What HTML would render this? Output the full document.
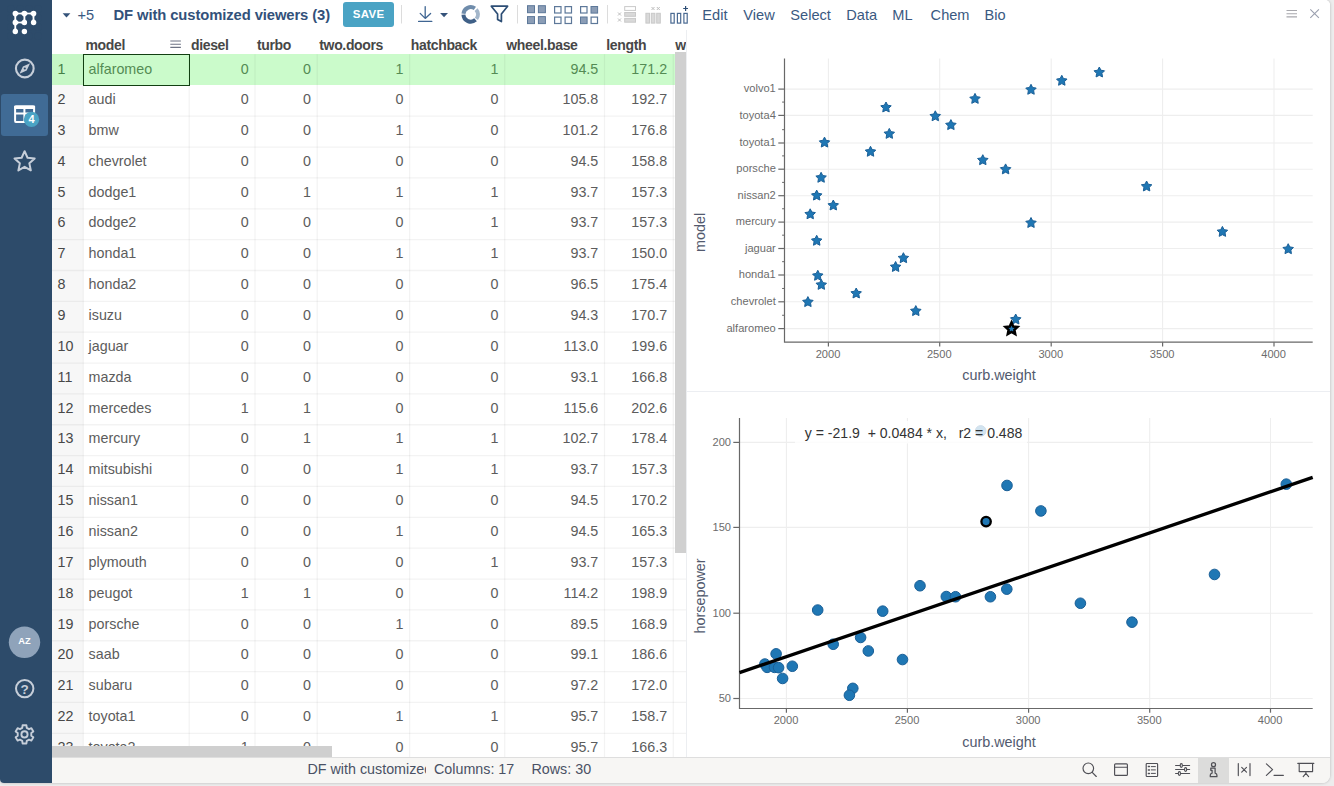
<!DOCTYPE html>
<html><head><meta charset="utf-8"><title>DF with customized viewers</title>
<style>
*{box-sizing:border-box;margin:0;padding:0}
html,body{width:1334px;height:786px;overflow:hidden;background:#ededed;font-family:"Liberation Sans",sans-serif;}
.win{position:absolute;left:0;top:0;width:1330px;height:783px;background:#fff;overflow:hidden;border-radius:0 5px 8px 4px;box-shadow:0 0 3px rgba(0,0,0,.25)}
.abs{position:absolute}
.side{position:absolute;left:0;top:0;width:52px;height:783px;background:#2d4b6a}
.tb{position:absolute;left:52px;top:0;width:1278px;height:30px;background:#fff}
.tb .t{position:absolute;top:0;height:30px;line-height:30px;white-space:nowrap;color:#3a5981;font-size:14.6px}
.title{font-weight:bold;color:#32517a !important;font-size:14.8px !important;letter-spacing:-0.1px}
.save{position:absolute;left:291px;top:2px;width:51.2px;height:25px;border-radius:3px;background:#4aa3c4;color:#fff;font-weight:bold;font-size:11.5px;line-height:25px;text-align:center;letter-spacing:.3px}
.grid{position:absolute;left:52px;top:30px;width:634px;height:727.5px;overflow:hidden;background:#fff}
.hdr{position:absolute;top:0;height:24px;line-height:30px;font-weight:bold;font-size:14px;color:#474747;white-space:nowrap;letter-spacing:-0.35px}
.row{position:absolute;left:0;width:634px;height:30.86px}
.c{position:absolute;top:0;height:30.86px;line-height:30.4px;font-size:14.3px;color:#5c5c5c;white-space:nowrap}
.c.n{text-align:right;padding-right:6.2px}
.c.s{text-align:left;padding-left:5.2px}
.c.rh{color:#484848;padding-left:5.6px}
.row.sel .c{color:#548b54}
.row.sel .c.rh{color:#457f45}
.status{position:absolute;left:52px;top:757px;width:1278px;height:26px;background:#f7f6f4;border-top:1px solid #dedede}
.status .t{position:absolute;top:0;line-height:23px;font-size:14.3px;color:#4a5164;white-space:nowrap}
.chart text{font-family:"Liberation Sans",sans-serif}
</style></head>
<body>
<div class="win">
<div class="side"><svg class="abs" style="left:0;top:0" width="52" height="783" viewBox="0 0 52 783">
<g fill="#fff">
<rect x="15.3" y="11.2" width="9.10" height="4.6"/>
<rect x="24.4" y="11.2" width="9.20" height="4.6"/>
<rect x="13.0" y="13.5" width="4.6" height="9.00"/>
<rect x="13.0" y="22.5" width="4.6" height="9.00"/>
<rect x="22.099999999999998" y="13.5" width="4.6" height="9.00"/>
<rect x="15.3" y="20.2" width="9.10" height="4.6"/>
<rect x="31.3" y="13.5" width="4.6" height="9.00"/>
</g><g fill="#2d4b6a">
<circle cx="10.75" cy="9.00" r="3.72"/>
<circle cx="10.75" cy="18.00" r="3.72"/>
<circle cx="10.75" cy="27.00" r="3.72"/>
<circle cx="10.75" cy="36.00" r="3.72"/>
<circle cx="19.85" cy="9.00" r="3.72"/>
<circle cx="19.85" cy="18.00" r="3.72"/>
<circle cx="19.85" cy="27.00" r="3.72"/>
<circle cx="19.85" cy="36.00" r="3.72"/>
<circle cx="28.95" cy="9.00" r="3.72"/>
<circle cx="28.95" cy="18.00" r="3.72"/>
<circle cx="28.95" cy="27.00" r="3.72"/>
<circle cx="28.95" cy="36.00" r="3.72"/>
<circle cx="38.05" cy="9.00" r="3.72"/>
<circle cx="38.05" cy="18.00" r="3.72"/>
<circle cx="38.05" cy="27.00" r="3.72"/>
<circle cx="38.05" cy="36.00" r="3.72"/>
</g><g fill="#fff">
<circle cx="15.3" cy="13.5" r="2.7"/>
<circle cx="24.4" cy="13.5" r="2.7"/>
<circle cx="33.6" cy="13.5" r="2.7"/>
<circle cx="15.3" cy="22.5" r="2.7"/>
<circle cx="24.4" cy="22.5" r="2.7"/>
<circle cx="33.6" cy="22.5" r="2.7"/>
<circle cx="15.3" cy="31.5" r="2.7"/>
<circle cx="24.4" cy="31.5" r="2.7"/>
</g>
<circle cx="24.8" cy="68.5" r="8.85" fill="none" stroke="#c6ced9" stroke-width="2.1"/>
<path d="M30.1,63.3 L26.7,70.4 L19.5,73.7 L22.9,66.6 Z" fill="#c6ced9"/>
<circle cx="24.8" cy="68.5" r="1.1" fill="#2d4b6a"/>
<rect x="1" y="94" width="47" height="42" rx="3" fill="#406b95"/>
<g fill="none" stroke="#fff" stroke-width="2">
<rect x="15.1" y="106.5" width="19" height="15.6" rx="1.2"/>
<path d="M15.1,113.6 H34 M24.4,107 V122"/>
</g>
<rect x="14.1" y="105.5" width="21" height="3.4" rx="1" fill="#fff"/>
<circle cx="31.5" cy="119.4" r="7.7" fill="#4aa3c4"/>
<text x="31.5" y="123.3" font-size="11" font-weight="bold" fill="#fff" text-anchor="middle" font-family="Liberation Sans">4</text>
<path d="M24.60,151.20 L27.54,157.75 L34.68,158.52 L29.36,163.35 L30.83,170.38 L24.60,166.80 L18.37,170.38 L19.84,163.35 L14.52,158.52 L21.66,157.75Z" fill="none" stroke="#c6ced9" stroke-width="2" stroke-linejoin="round"/>
<circle cx="24.5" cy="642.3" r="15.7" fill="#8fa3ba"/>
<text x="24.5" y="644.3" font-size="9.3" font-weight="bold" fill="#fff" text-anchor="middle" font-family="Liberation Sans">AZ</text>
<circle cx="24.7" cy="688.6" r="8.7" fill="none" stroke="#c6ced9" stroke-width="2"/>
<text x="24.7" y="693.6" font-size="13.5" font-weight="bold" fill="#c6ced9" text-anchor="middle" font-family="Liberation Sans">?</text>
<path d="M22.25,727.88 L22.57,725.30 L26.43,725.30 L26.75,727.88 L29.03,729.19 L31.41,728.18 L33.34,731.53 L31.27,733.08 L31.27,735.72 L33.34,737.27 L31.41,740.62 L29.03,739.61 L26.75,740.92 L26.43,743.50 L22.57,743.50 L22.25,740.92 L19.97,739.61 L17.59,740.62 L15.66,737.27 L17.73,735.72 L17.73,733.08 L15.66,731.53 L17.59,728.18 L19.97,729.19Z" fill="none" stroke="#c6ced9" stroke-width="1.9" stroke-linejoin="round"/>
<circle cx="24.5" cy="734.4" r="3.1" fill="none" stroke="#c6ced9" stroke-width="1.9"/>
</svg></div>
<div class="tb">
<div class="t " style="left:25.5px">+5</div>
<div class="t title" style="left:61.5px">DF with customized viewers (3)</div>
<div class="save">SAVE</div>
<div class="t " style="left:650.3px">Edit</div>
<div class="t " style="left:691.3px">View</div>
<div class="t " style="left:738.3px">Select</div>
<div class="t " style="left:794.3px">Data</div>
<div class="t " style="left:840.3px">ML</div>
<div class="t " style="left:878.6px">Chem</div>
<div class="t " style="left:932.6px">Bio</div>
</div>
<svg class="abs" style="left:0;top:0" width="1330" height="30" viewBox="0 0 1330 30">
<path d="M62.6,13.2 L70.4,13.2 L66.5,17.4 Z" fill="#35537a"/>
<g fill="none" stroke="#3f6592" stroke-width="1.3" stroke-linecap="round" stroke-linejoin="round"><path d="M425.2,6.6 V18.3 M420.2,13.4 L425.2,18.4 L430.6,13.4 M418.6,21.4 H431.8"/></g>
<path d="M440.1,13 L448,13 L444.05,17.2 Z" fill="#35537a"/>
<g fill="none" stroke-width="4">
<path d="M463.48,13.77 A7.25,7.25 0 0 1 474.86,8.46" stroke="#6f8cab"/>
<path d="M476.09,9.55 A7.25,7.25 0 0 1 476.41,18.86" stroke="#a3b6ca"/>
<path d="M475.55,19.79 A7.25,7.25 0 0 1 463.45,14.65" stroke="#3f6087"/>
</g>
<path d="M491.3,6.2 H507.6 L501.4,14 V21.6 L497.6,19.4 V14 Z" fill="none" stroke="#2d4e75" stroke-width="1.7" stroke-linejoin="round"/>
<path d="M401.5,5 V23.5 M517.5,5 V23.5 M607.5,5 V23.5" stroke="#dcdcdc" stroke-width="1"/>
<rect x="527.5" y="5.7" width="7.0" height="7.0" fill="#8b9db6" stroke="#5d7899" stroke-width="1"/>
<rect x="538.4" y="5.7" width="7.0" height="7.0" fill="#8b9db6" stroke="#5d7899" stroke-width="1"/>
<rect x="527.5" y="16.6" width="7.0" height="7.0" fill="#8b9db6" stroke="#5d7899" stroke-width="1"/>
<rect x="538.4" y="16.6" width="7.0" height="7.0" fill="#8b9db6" stroke="#5d7899" stroke-width="1"/>
<rect x="554.6" y="6.6" width="6.3999999999999995" height="6.3999999999999995" fill="#fff" stroke="#5d7899" stroke-width="1.2"/>
<rect x="565.1" y="6.6" width="6.3999999999999995" height="6.3999999999999995" fill="#fff" stroke="#5d7899" stroke-width="1.2"/>
<rect x="554.6" y="17.1" width="6.3999999999999995" height="6.3999999999999995" fill="#fff" stroke="#5d7899" stroke-width="1.2"/>
<rect x="565.1" y="17.1" width="6.3999999999999995" height="6.3999999999999995" fill="#fff" stroke="#5d7899" stroke-width="1.2"/>
<rect x="580.6" y="6.6" width="6.3999999999999995" height="6.3999999999999995" fill="#fff" stroke="#5d7899" stroke-width="1.2"/>
<rect x="591.0" y="6.5" width="6.6" height="6.6" fill="#8b9db6" stroke="#5d7899" stroke-width="1"/>
<rect x="580.5" y="17.0" width="6.6" height="6.6" fill="#8b9db6" stroke="#5d7899" stroke-width="1"/>
<rect x="591.1" y="17.1" width="6.3999999999999995" height="6.3999999999999995" fill="#fff" stroke="#5d7899" stroke-width="1.2"/>
<rect x="624.7" y="6.6" width="10.8" height="3.8" fill="#fff" stroke="#c9c9c9" stroke-width="1"/>
<rect x="624.7" y="12.5" width="10.8" height="3.8" fill="#d9d9d9" stroke="#c9c9c9" stroke-width="1"/>
<rect x="624.7" y="18.4" width="10.8" height="3.8" fill="#d9d9d9" stroke="#c9c9c9" stroke-width="1"/>
<path d="M618,12.5 l3,3 m0,-3 l-3,3" stroke="#bdbdbd" stroke-width="1" fill="none"/>
<path d="M618,18.5 l3,3 m0,-3 l-3,3" stroke="#bdbdbd" stroke-width="1" fill="none"/>
<rect x="645.9" y="13.3" width="3.6" height="9.8" fill="#d9d9d9" stroke="#c9c9c9" stroke-width="1"/>
<rect x="651.3" y="13.3" width="3.6" height="9.8" fill="#d9d9d9" stroke="#c9c9c9" stroke-width="1"/>
<rect x="656.6999999999999" y="13.3" width="3.6" height="9.8" fill="#d9d9d9" stroke="#c9c9c9" stroke-width="1"/>
<path d="M651.5,7 l3,3 m0,-3 l-3,3" stroke="#bdbdbd" stroke-width="1" fill="none"/>
<path d="M656.8,7 l3,3 m0,-3 l-3,3" stroke="#bdbdbd" stroke-width="1" fill="none"/>
<rect x="670.9" y="13.4" width="3.3" height="9.7" fill="#fff" stroke="#4a6a92" stroke-width="1.2"/>
<rect x="677.4" y="13.4" width="3.3" height="9.7" fill="#fff" stroke="#4a6a92" stroke-width="1.2"/>
<rect x="683.9" y="13.4" width="3.3" height="9.7" fill="#fff" stroke="#4a6a92" stroke-width="1.2"/>
<path d="M683.2,8.5 h4.8 m-2.4,-2.4 v4.8" stroke="#2d4e75" stroke-width="1.2" fill="none"/>
<path d="M1286.5,10.5 h10.5 M1286.5,13.7 h10.5 M1286.5,16.9 h10.5" stroke="#a8a8ad" stroke-width="1.1"/>
<path d="M1310.3,9.3 l8.6,8.6 m0,-8.6 l-8.6,8.6" stroke="#9a9fae" stroke-width="1.1"/>
</svg>
<div class="grid">
<div class="hdr" style="left:33.5px">model</div>
<div class="hdr" style="left:139.0px">diesel</div>
<div class="hdr" style="left:205.0px">turbo</div>
<div class="hdr" style="left:267.3px">two.doors</div>
<div class="hdr" style="left:358.8px">hatchback</div>
<div class="hdr" style="left:454.3px">wheel.base</div>
<div class="hdr" style="left:554.3px">length</div>
<div class="hdr" style="left:623.3px">width</div>
<svg class="abs" style="left:118px;top:9.5px" width="12" height="9"><path d="M0.3,1 h10.6 M0.3,4.2 h10.6 M0.3,7.4 h10.6" stroke="#6d7384" stroke-width="1.1"/></svg>
<div class="abs" style="left:0;top:24.200000000000003px;width:31.4px;height:710px;background:#f7f7f7"></div>
<div class="abs" style="left:0;top:24.2px;width:634px;height:30.86px;background:#cbfbcb"></div>
<div class="abs" style="left:0;top:24.2px;width:31.4px;height:30.86px;background:#c6f7c6"></div>
<svg class="abs" style="left:0;top:0" width="634" height="728" viewBox="52 30 634 728">
<g stroke="#000" stroke-opacity="0.048" stroke-width="1.3" fill="none">
<path d="M83.4,54.2 V758"/>
<path d="M189.2,54.2 V758"/>
<path d="M255.0,54.2 V758"/>
<path d="M317.2,54.2 V758"/>
<path d="M409.6,54.2 V758"/>
<path d="M504.7,54.2 V758"/>
<path d="M604.5,54.2 V758"/>
<path d="M673.3,54.2 V758"/>
<path d="M52,116.21 H686"/>
<path d="M52,147.06 H686"/>
<path d="M52,177.92 H686"/>
<path d="M52,208.78 H686"/>
<path d="M52,239.63 H686"/>
<path d="M52,270.49 H686"/>
<path d="M52,301.34 H686"/>
<path d="M52,332.19 H686"/>
<path d="M52,363.05 H686"/>
<path d="M52,393.91 H686"/>
<path d="M52,424.76 H686"/>
<path d="M52,455.62 H686"/>
<path d="M52,486.47 H686"/>
<path d="M52,517.33 H686"/>
<path d="M52,548.18 H686"/>
<path d="M52,579.03 H686"/>
<path d="M52,609.89 H686"/>
<path d="M52,640.75 H686"/>
<path d="M52,671.60 H686"/>
<path d="M52,702.46 H686"/>
<path d="M52,733.31 H686"/>
<path d="M52,764.16 H686"/>
</g></svg>
<div class="row sel" style="top:24.00px">
<div class="c rh" style="left:0.0px;width:31.4px">1</div>
<div class="c s" style="left:31.4px;width:105.8px">alfaromeo</div>
<div class="c n" style="left:137.2px;width:65.8px">0</div>
<div class="c n" style="left:203.0px;width:62.2px">0</div>
<div class="c n" style="left:265.2px;width:92.4px">1</div>
<div class="c n" style="left:357.6px;width:95.1px">1</div>
<div class="c n" style="left:452.7px;width:99.8px">94.5</div>
<div class="c n" style="left:552.5px;width:68.8px">171.2</div>
</div>
<div class="row" style="top:54.00px">
<div class="c rh" style="left:0.0px;width:31.4px">2</div>
<div class="c s" style="left:31.4px;width:105.8px">audi</div>
<div class="c n" style="left:137.2px;width:65.8px">0</div>
<div class="c n" style="left:203.0px;width:62.2px">0</div>
<div class="c n" style="left:265.2px;width:92.4px">0</div>
<div class="c n" style="left:357.6px;width:95.1px">0</div>
<div class="c n" style="left:452.7px;width:99.8px">105.8</div>
<div class="c n" style="left:552.5px;width:68.8px">192.7</div>
</div>
<div class="row" style="top:85.00px">
<div class="c rh" style="left:0.0px;width:31.4px">3</div>
<div class="c s" style="left:31.4px;width:105.8px">bmw</div>
<div class="c n" style="left:137.2px;width:65.8px">0</div>
<div class="c n" style="left:203.0px;width:62.2px">0</div>
<div class="c n" style="left:265.2px;width:92.4px">1</div>
<div class="c n" style="left:357.6px;width:95.1px">0</div>
<div class="c n" style="left:452.7px;width:99.8px">101.2</div>
<div class="c n" style="left:552.5px;width:68.8px">176.8</div>
</div>
<div class="row" style="top:116.00px">
<div class="c rh" style="left:0.0px;width:31.4px">4</div>
<div class="c s" style="left:31.4px;width:105.8px">chevrolet</div>
<div class="c n" style="left:137.2px;width:65.8px">0</div>
<div class="c n" style="left:203.0px;width:62.2px">0</div>
<div class="c n" style="left:265.2px;width:92.4px">0</div>
<div class="c n" style="left:357.6px;width:95.1px">0</div>
<div class="c n" style="left:452.7px;width:99.8px">94.5</div>
<div class="c n" style="left:552.5px;width:68.8px">158.8</div>
</div>
<div class="row" style="top:147.00px">
<div class="c rh" style="left:0.0px;width:31.4px">5</div>
<div class="c s" style="left:31.4px;width:105.8px">dodge1</div>
<div class="c n" style="left:137.2px;width:65.8px">0</div>
<div class="c n" style="left:203.0px;width:62.2px">1</div>
<div class="c n" style="left:265.2px;width:92.4px">1</div>
<div class="c n" style="left:357.6px;width:95.1px">1</div>
<div class="c n" style="left:452.7px;width:99.8px">93.7</div>
<div class="c n" style="left:552.5px;width:68.8px">157.3</div>
</div>
<div class="row" style="top:177.00px">
<div class="c rh" style="left:0.0px;width:31.4px">6</div>
<div class="c s" style="left:31.4px;width:105.8px">dodge2</div>
<div class="c n" style="left:137.2px;width:65.8px">0</div>
<div class="c n" style="left:203.0px;width:62.2px">0</div>
<div class="c n" style="left:265.2px;width:92.4px">0</div>
<div class="c n" style="left:357.6px;width:95.1px">1</div>
<div class="c n" style="left:452.7px;width:99.8px">93.7</div>
<div class="c n" style="left:552.5px;width:68.8px">157.3</div>
</div>
<div class="row" style="top:208.00px">
<div class="c rh" style="left:0.0px;width:31.4px">7</div>
<div class="c s" style="left:31.4px;width:105.8px">honda1</div>
<div class="c n" style="left:137.2px;width:65.8px">0</div>
<div class="c n" style="left:203.0px;width:62.2px">0</div>
<div class="c n" style="left:265.2px;width:92.4px">1</div>
<div class="c n" style="left:357.6px;width:95.1px">1</div>
<div class="c n" style="left:452.7px;width:99.8px">93.7</div>
<div class="c n" style="left:552.5px;width:68.8px">150.0</div>
</div>
<div class="row" style="top:239.00px">
<div class="c rh" style="left:0.0px;width:31.4px">8</div>
<div class="c s" style="left:31.4px;width:105.8px">honda2</div>
<div class="c n" style="left:137.2px;width:65.8px">0</div>
<div class="c n" style="left:203.0px;width:62.2px">0</div>
<div class="c n" style="left:265.2px;width:92.4px">0</div>
<div class="c n" style="left:357.6px;width:95.1px">0</div>
<div class="c n" style="left:452.7px;width:99.8px">96.5</div>
<div class="c n" style="left:552.5px;width:68.8px">175.4</div>
</div>
<div class="row" style="top:270.00px">
<div class="c rh" style="left:0.0px;width:31.4px">9</div>
<div class="c s" style="left:31.4px;width:105.8px">isuzu</div>
<div class="c n" style="left:137.2px;width:65.8px">0</div>
<div class="c n" style="left:203.0px;width:62.2px">0</div>
<div class="c n" style="left:265.2px;width:92.4px">0</div>
<div class="c n" style="left:357.6px;width:95.1px">0</div>
<div class="c n" style="left:452.7px;width:99.8px">94.3</div>
<div class="c n" style="left:552.5px;width:68.8px">170.7</div>
</div>
<div class="row" style="top:301.00px">
<div class="c rh" style="left:0.0px;width:31.4px">10</div>
<div class="c s" style="left:31.4px;width:105.8px">jaguar</div>
<div class="c n" style="left:137.2px;width:65.8px">0</div>
<div class="c n" style="left:203.0px;width:62.2px">0</div>
<div class="c n" style="left:265.2px;width:92.4px">0</div>
<div class="c n" style="left:357.6px;width:95.1px">0</div>
<div class="c n" style="left:452.7px;width:99.8px">113.0</div>
<div class="c n" style="left:552.5px;width:68.8px">199.6</div>
</div>
<div class="row" style="top:332.00px">
<div class="c rh" style="left:0.0px;width:31.4px">11</div>
<div class="c s" style="left:31.4px;width:105.8px">mazda</div>
<div class="c n" style="left:137.2px;width:65.8px">0</div>
<div class="c n" style="left:203.0px;width:62.2px">0</div>
<div class="c n" style="left:265.2px;width:92.4px">0</div>
<div class="c n" style="left:357.6px;width:95.1px">0</div>
<div class="c n" style="left:452.7px;width:99.8px">93.1</div>
<div class="c n" style="left:552.5px;width:68.8px">166.8</div>
</div>
<div class="row" style="top:363.00px">
<div class="c rh" style="left:0.0px;width:31.4px">12</div>
<div class="c s" style="left:31.4px;width:105.8px">mercedes</div>
<div class="c n" style="left:137.2px;width:65.8px">1</div>
<div class="c n" style="left:203.0px;width:62.2px">1</div>
<div class="c n" style="left:265.2px;width:92.4px">0</div>
<div class="c n" style="left:357.6px;width:95.1px">0</div>
<div class="c n" style="left:452.7px;width:99.8px">115.6</div>
<div class="c n" style="left:552.5px;width:68.8px">202.6</div>
</div>
<div class="row" style="top:393.00px">
<div class="c rh" style="left:0.0px;width:31.4px">13</div>
<div class="c s" style="left:31.4px;width:105.8px">mercury</div>
<div class="c n" style="left:137.2px;width:65.8px">0</div>
<div class="c n" style="left:203.0px;width:62.2px">1</div>
<div class="c n" style="left:265.2px;width:92.4px">1</div>
<div class="c n" style="left:357.6px;width:95.1px">1</div>
<div class="c n" style="left:452.7px;width:99.8px">102.7</div>
<div class="c n" style="left:552.5px;width:68.8px">178.4</div>
</div>
<div class="row" style="top:424.00px">
<div class="c rh" style="left:0.0px;width:31.4px">14</div>
<div class="c s" style="left:31.4px;width:105.8px">mitsubishi</div>
<div class="c n" style="left:137.2px;width:65.8px">0</div>
<div class="c n" style="left:203.0px;width:62.2px">0</div>
<div class="c n" style="left:265.2px;width:92.4px">1</div>
<div class="c n" style="left:357.6px;width:95.1px">1</div>
<div class="c n" style="left:452.7px;width:99.8px">93.7</div>
<div class="c n" style="left:552.5px;width:68.8px">157.3</div>
</div>
<div class="row" style="top:455.00px">
<div class="c rh" style="left:0.0px;width:31.4px">15</div>
<div class="c s" style="left:31.4px;width:105.8px">nissan1</div>
<div class="c n" style="left:137.2px;width:65.8px">0</div>
<div class="c n" style="left:203.0px;width:62.2px">0</div>
<div class="c n" style="left:265.2px;width:92.4px">0</div>
<div class="c n" style="left:357.6px;width:95.1px">0</div>
<div class="c n" style="left:452.7px;width:99.8px">94.5</div>
<div class="c n" style="left:552.5px;width:68.8px">170.2</div>
</div>
<div class="row" style="top:486.00px">
<div class="c rh" style="left:0.0px;width:31.4px">16</div>
<div class="c s" style="left:31.4px;width:105.8px">nissan2</div>
<div class="c n" style="left:137.2px;width:65.8px">0</div>
<div class="c n" style="left:203.0px;width:62.2px">0</div>
<div class="c n" style="left:265.2px;width:92.4px">1</div>
<div class="c n" style="left:357.6px;width:95.1px">0</div>
<div class="c n" style="left:452.7px;width:99.8px">94.5</div>
<div class="c n" style="left:552.5px;width:68.8px">165.3</div>
</div>
<div class="row" style="top:517.00px">
<div class="c rh" style="left:0.0px;width:31.4px">17</div>
<div class="c s" style="left:31.4px;width:105.8px">plymouth</div>
<div class="c n" style="left:137.2px;width:65.8px">0</div>
<div class="c n" style="left:203.0px;width:62.2px">0</div>
<div class="c n" style="left:265.2px;width:92.4px">0</div>
<div class="c n" style="left:357.6px;width:95.1px">1</div>
<div class="c n" style="left:452.7px;width:99.8px">93.7</div>
<div class="c n" style="left:552.5px;width:68.8px">157.3</div>
</div>
<div class="row" style="top:548.00px">
<div class="c rh" style="left:0.0px;width:31.4px">18</div>
<div class="c s" style="left:31.4px;width:105.8px">peugot</div>
<div class="c n" style="left:137.2px;width:65.8px">1</div>
<div class="c n" style="left:203.0px;width:62.2px">1</div>
<div class="c n" style="left:265.2px;width:92.4px">0</div>
<div class="c n" style="left:357.6px;width:95.1px">0</div>
<div class="c n" style="left:452.7px;width:99.8px">114.2</div>
<div class="c n" style="left:552.5px;width:68.8px">198.9</div>
</div>
<div class="row" style="top:579.00px">
<div class="c rh" style="left:0.0px;width:31.4px">19</div>
<div class="c s" style="left:31.4px;width:105.8px">porsche</div>
<div class="c n" style="left:137.2px;width:65.8px">0</div>
<div class="c n" style="left:203.0px;width:62.2px">0</div>
<div class="c n" style="left:265.2px;width:92.4px">1</div>
<div class="c n" style="left:357.6px;width:95.1px">0</div>
<div class="c n" style="left:452.7px;width:99.8px">89.5</div>
<div class="c n" style="left:552.5px;width:68.8px">168.9</div>
</div>
<div class="row" style="top:609.00px">
<div class="c rh" style="left:0.0px;width:31.4px">20</div>
<div class="c s" style="left:31.4px;width:105.8px">saab</div>
<div class="c n" style="left:137.2px;width:65.8px">0</div>
<div class="c n" style="left:203.0px;width:62.2px">0</div>
<div class="c n" style="left:265.2px;width:92.4px">0</div>
<div class="c n" style="left:357.6px;width:95.1px">0</div>
<div class="c n" style="left:452.7px;width:99.8px">99.1</div>
<div class="c n" style="left:552.5px;width:68.8px">186.6</div>
</div>
<div class="row" style="top:640.00px">
<div class="c rh" style="left:0.0px;width:31.4px">21</div>
<div class="c s" style="left:31.4px;width:105.8px">subaru</div>
<div class="c n" style="left:137.2px;width:65.8px">0</div>
<div class="c n" style="left:203.0px;width:62.2px">0</div>
<div class="c n" style="left:265.2px;width:92.4px">0</div>
<div class="c n" style="left:357.6px;width:95.1px">0</div>
<div class="c n" style="left:452.7px;width:99.8px">97.2</div>
<div class="c n" style="left:552.5px;width:68.8px">172.0</div>
</div>
<div class="row" style="top:671.00px">
<div class="c rh" style="left:0.0px;width:31.4px">22</div>
<div class="c s" style="left:31.4px;width:105.8px">toyota1</div>
<div class="c n" style="left:137.2px;width:65.8px">0</div>
<div class="c n" style="left:203.0px;width:62.2px">0</div>
<div class="c n" style="left:265.2px;width:92.4px">1</div>
<div class="c n" style="left:357.6px;width:95.1px">1</div>
<div class="c n" style="left:452.7px;width:99.8px">95.7</div>
<div class="c n" style="left:552.5px;width:68.8px">158.7</div>
</div>
<div class="row" style="top:702.00px">
<div class="c rh" style="left:0.0px;width:31.4px">23</div>
<div class="c s" style="left:31.4px;width:105.8px">toyota2</div>
<div class="c n" style="left:137.2px;width:65.8px">1</div>
<div class="c n" style="left:203.0px;width:62.2px">0</div>
<div class="c n" style="left:265.2px;width:92.4px">0</div>
<div class="c n" style="left:357.6px;width:95.1px">0</div>
<div class="c n" style="left:452.7px;width:99.8px">95.7</div>
<div class="c n" style="left:552.5px;width:68.8px">166.3</div>
</div>
<div class="abs" style="left:31px;top:24px;width:106.8px;height:31.6px;border:1.4px solid #123f12"></div>
<div class="abs" style="left:623.3px;top:21.799999999999997px;width:10.7px;height:501.6px;background:#d0d0d0"></div>
<div class="abs" style="left:0;top:716.2px;width:279.8px;height:11.3px;background:#cfcfcf"></div>
</div>
<div class="abs" style="left:686px;top:30px;width:1px;height:727px;background:#eceef1"></div>
<div class="abs" style="left:687px;top:391px;width:643px;height:1px;background:#eceef2"></div>
<svg class="abs chart" style="left:687px;top:30px" width="643" height="727" viewBox="687 30 643 727">
<g stroke="#eeeeee" stroke-width="1.1" fill="none">
<path d="M828.4,58.5 V342.2"/>
<path d="M939.7,58.5 V342.2"/>
<path d="M1051.2,58.5 V342.2"/>
<path d="M1162.6,58.5 V342.2"/>
<path d="M1274.0,58.5 V342.2"/>
<path d="M784.5,328.60 H1312.7"/>
<path d="M784.5,301.80 H1312.7"/>
<path d="M784.5,275.00 H1312.7"/>
<path d="M784.5,248.50 H1312.7"/>
<path d="M784.5,222.10 H1312.7"/>
<path d="M784.5,195.70 H1312.7"/>
<path d="M784.5,169.20 H1312.7"/>
<path d="M784.5,143.00 H1312.7"/>
<path d="M784.5,115.40 H1312.7"/>
<path d="M784.5,89.10 H1312.7"/>
</g>
<g stroke="#686868" stroke-width="1.2" fill="none">
<path d="M784.5,58.5 V342.2 H1312.7"/>
<path d="M778.3,328.60 H784.5"/>
<path d="M778.3,301.80 H784.5"/>
<path d="M778.3,275.00 H784.5"/>
<path d="M778.3,248.50 H784.5"/>
<path d="M778.3,222.10 H784.5"/>
<path d="M778.3,195.70 H784.5"/>
<path d="M778.3,169.20 H784.5"/>
<path d="M778.3,143.00 H784.5"/>
<path d="M778.3,115.40 H784.5"/>
<path d="M778.3,89.10 H784.5"/>
<path d="M782.1,315.28 H784.5" stroke-width="1"/>
<path d="M782.1,288.48 H784.5" stroke-width="1"/>
<path d="M782.1,261.68 H784.5" stroke-width="1"/>
<path d="M782.1,235.18 H784.5" stroke-width="1"/>
<path d="M782.1,208.78 H784.5" stroke-width="1"/>
<path d="M782.1,182.38 H784.5" stroke-width="1"/>
<path d="M782.1,155.88 H784.5" stroke-width="1"/>
<path d="M782.1,129.68 H784.5" stroke-width="1"/>
<path d="M782.1,102.08 H784.5" stroke-width="1"/>
<path d="M828.4,342.2 v4.2"/>
<path d="M939.7,342.2 v4.2"/>
<path d="M1051.2,342.2 v4.2"/>
<path d="M1162.6,342.2 v4.2"/>
<path d="M1274.0,342.2 v4.2"/>
</g>
<g font-size="11.1" fill="#6c6c6c">
<text x="775.8" y="331.70" text-anchor="end">alfaromeo</text>
<text x="775.8" y="304.90" text-anchor="end">chevrolet</text>
<text x="775.8" y="278.10" text-anchor="end">honda1</text>
<text x="775.8" y="251.60" text-anchor="end">jaguar</text>
<text x="775.8" y="225.20" text-anchor="end">mercury</text>
<text x="775.8" y="198.80" text-anchor="end">nissan2</text>
<text x="775.8" y="172.30" text-anchor="end">porsche</text>
<text x="775.8" y="146.10" text-anchor="end">toyota1</text>
<text x="775.8" y="118.50" text-anchor="end">toyota4</text>
<text x="775.8" y="92.20" text-anchor="end">volvo1</text>
<text x="828.0" y="358.1" text-anchor="middle">2000</text>
<text x="939.3000000000001" y="358.1" text-anchor="middle">2500</text>
<text x="1050.8" y="358.1" text-anchor="middle">3000</text>
<text x="1162.1999999999998" y="358.1" text-anchor="middle">3500</text>
<text x="1273.6" y="358.1" text-anchor="middle">4000</text>
</g>
<text x="999" y="380" text-anchor="middle" font-size="14.4" fill="#525a6e">curb.weight</text>
<text transform="translate(704.5,232.5) rotate(-90)" text-anchor="middle" font-size="14.4" fill="#525a6e">model</text>
<g fill="#1f77b4" stroke="#1a5f97" stroke-width="1" stroke-linejoin="round">
<path d="M1099.30,67.00 L1100.95,70.23 L1104.53,70.80 L1101.96,73.37 L1102.53,76.95 L1099.30,75.30 L1096.07,76.95 L1096.64,73.37 L1094.07,70.80 L1097.65,70.23Z"/>
<path d="M1061.80,75.30 L1063.45,78.53 L1067.03,79.10 L1064.46,81.67 L1065.03,85.25 L1061.80,83.60 L1058.57,85.25 L1059.14,81.67 L1056.57,79.10 L1060.15,78.53Z"/>
<path d="M1031.00,84.30 L1032.65,87.53 L1036.23,88.10 L1033.66,90.67 L1034.23,94.25 L1031.00,92.60 L1027.77,94.25 L1028.34,90.67 L1025.77,88.10 L1029.35,87.53Z"/>
<path d="M975.00,93.40 L976.65,96.63 L980.23,97.20 L977.66,99.77 L978.23,103.35 L975.00,101.70 L971.77,103.35 L972.34,99.77 L969.77,97.20 L973.35,96.63Z"/>
<path d="M886.00,102.00 L887.65,105.23 L891.23,105.80 L888.66,108.37 L889.23,111.95 L886.00,110.30 L882.77,111.95 L883.34,108.37 L880.77,105.80 L884.35,105.23Z"/>
<path d="M935.30,110.80 L936.95,114.03 L940.53,114.60 L937.96,117.17 L938.53,120.75 L935.30,119.10 L932.07,120.75 L932.64,117.17 L930.07,114.60 L933.65,114.03Z"/>
<path d="M950.90,119.60 L952.55,122.83 L956.13,123.40 L953.56,125.97 L954.13,129.55 L950.90,127.90 L947.67,129.55 L948.24,125.97 L945.67,123.40 L949.25,122.83Z"/>
<path d="M889.30,128.40 L890.95,131.63 L894.53,132.20 L891.96,134.77 L892.53,138.35 L889.30,136.70 L886.07,138.35 L886.64,134.77 L884.07,132.20 L887.65,131.63Z"/>
<path d="M824.50,137.10 L826.15,140.33 L829.73,140.90 L827.16,143.47 L827.73,147.05 L824.50,145.40 L821.27,147.05 L821.84,143.47 L819.27,140.90 L822.85,140.33Z"/>
<path d="M870.50,146.30 L872.15,149.53 L875.73,150.10 L873.16,152.67 L873.73,156.25 L870.50,154.60 L867.27,156.25 L867.84,152.67 L865.27,150.10 L868.85,149.53Z"/>
<path d="M982.80,154.70 L984.45,157.93 L988.03,158.50 L985.46,161.07 L986.03,164.65 L982.80,163.00 L979.57,164.65 L980.14,161.07 L977.57,158.50 L981.15,157.93Z"/>
<path d="M1005.60,163.90 L1007.25,167.13 L1010.83,167.70 L1008.26,170.27 L1008.83,173.85 L1005.60,172.20 L1002.37,173.85 L1002.94,170.27 L1000.37,167.70 L1003.95,167.13Z"/>
<path d="M821.10,172.30 L822.75,175.53 L826.33,176.10 L823.76,178.67 L824.33,182.25 L821.10,180.60 L817.87,182.25 L818.44,178.67 L815.87,176.10 L819.45,175.53Z"/>
<path d="M1146.60,181.00 L1148.25,184.23 L1151.83,184.80 L1149.26,187.37 L1149.83,190.95 L1146.60,189.30 L1143.37,190.95 L1143.94,187.37 L1141.37,184.80 L1144.95,184.23Z"/>
<path d="M816.70,190.10 L818.35,193.33 L821.93,193.90 L819.36,196.47 L819.93,200.05 L816.70,198.40 L813.47,200.05 L814.04,196.47 L811.47,193.90 L815.05,193.33Z"/>
<path d="M833.30,200.00 L834.95,203.23 L838.53,203.80 L835.96,206.37 L836.53,209.95 L833.30,208.30 L830.07,209.95 L830.64,206.37 L828.07,203.80 L831.65,203.23Z"/>
<path d="M810.20,208.80 L811.85,212.03 L815.43,212.60 L812.86,215.17 L813.43,218.75 L810.20,217.10 L806.97,218.75 L807.54,215.17 L804.97,212.60 L808.55,212.03Z"/>
<path d="M1031.00,217.50 L1032.65,220.73 L1036.23,221.30 L1033.66,223.87 L1034.23,227.45 L1031.00,225.80 L1027.77,227.45 L1028.34,223.87 L1025.77,221.30 L1029.35,220.73Z"/>
<path d="M1222.40,226.40 L1224.05,229.63 L1227.63,230.20 L1225.06,232.77 L1225.63,236.35 L1222.40,234.70 L1219.17,236.35 L1219.74,232.77 L1217.17,230.20 L1220.75,229.63Z"/>
<path d="M816.70,235.30 L818.35,238.53 L821.93,239.10 L819.36,241.67 L819.93,245.25 L816.70,243.60 L813.47,245.25 L814.04,241.67 L811.47,239.10 L815.05,238.53Z"/>
<path d="M1288.20,243.70 L1289.85,246.93 L1293.43,247.50 L1290.86,250.07 L1291.43,253.65 L1288.20,252.00 L1284.97,253.65 L1285.54,250.07 L1282.97,247.50 L1286.55,246.93Z"/>
<path d="M903.40,252.70 L905.05,255.93 L908.63,256.50 L906.06,259.07 L906.63,262.65 L903.40,261.00 L900.17,262.65 L900.74,259.07 L898.17,256.50 L901.75,255.93Z"/>
<path d="M895.60,261.50 L897.25,264.73 L900.83,265.30 L898.26,267.87 L898.83,271.45 L895.60,269.80 L892.37,271.45 L892.94,267.87 L890.37,265.30 L893.95,264.73Z"/>
<path d="M817.80,270.30 L819.45,273.53 L823.03,274.10 L820.46,276.67 L821.03,280.25 L817.80,278.60 L814.57,280.25 L815.14,276.67 L812.57,274.10 L816.15,273.53Z"/>
<path d="M821.30,279.40 L822.95,282.63 L826.53,283.20 L823.96,285.77 L824.53,289.35 L821.30,287.70 L818.07,289.35 L818.64,285.77 L816.07,283.20 L819.65,282.63Z"/>
<path d="M856.20,288.00 L857.85,291.23 L861.43,291.80 L858.86,294.37 L859.43,297.95 L856.20,296.30 L852.97,297.95 L853.54,294.37 L850.97,291.80 L854.55,291.23Z"/>
<path d="M807.90,296.60 L809.55,299.83 L813.13,300.40 L810.56,302.97 L811.13,306.55 L807.90,304.90 L804.67,306.55 L805.24,302.97 L802.67,300.40 L806.25,299.83Z"/>
<path d="M915.80,305.60 L917.45,308.83 L921.03,309.40 L918.46,311.97 L919.03,315.55 L915.80,313.90 L912.57,315.55 L913.14,311.97 L910.57,309.40 L914.15,308.83Z"/>
<path d="M1015.70,314.00 L1017.35,317.23 L1020.93,317.80 L1018.36,320.37 L1018.93,323.95 L1015.70,322.30 L1012.47,323.95 L1013.04,320.37 L1010.47,317.80 L1014.05,317.23Z"/>
</g>
<path d="M1011.50,322.60 L1013.26,326.47 L1017.49,326.95 L1014.35,329.83 L1015.20,334.00 L1011.50,331.90 L1007.80,334.00 L1008.65,329.83 L1005.51,326.95 L1009.74,326.47Z" fill="#1f77b4" stroke="#000" stroke-width="2.5" stroke-linejoin="miter"/>
<g stroke="#eeeeee" stroke-width="1.1" fill="none">
<path d="M786.4,418 V708.5"/>
<path d="M907.4,418 V708.5"/>
<path d="M1028.6,418 V708.5"/>
<path d="M1149.7,418 V708.5"/>
<path d="M1270.5,418 V708.5"/>
<path d="M739.5,442.40 H1312.7"/>
<path d="M739.5,527.40 H1312.7"/>
<path d="M739.5,613.20 H1312.7"/>
<path d="M739.5,698.50 H1312.7"/>
</g>
<g stroke="#686868" stroke-width="1.2" fill="none">
<path d="M739.5,418 V708.5 H1312.7"/>
<path d="M733.3,442.40 H739.5"/>
<path d="M733.3,527.40 H739.5"/>
<path d="M733.3,613.20 H739.5"/>
<path d="M733.3,698.50 H739.5"/>
<path d="M786.4,708.5 v4.2"/>
<path d="M907.4,708.5 v4.2"/>
<path d="M1028.6,708.5 v4.2"/>
<path d="M1149.7,708.5 v4.2"/>
<path d="M1270.5,708.5 v4.2"/>
</g>
<g font-size="11.1" fill="#6c6c6c">
<text x="731" y="446.30" text-anchor="end">200</text>
<text x="731" y="531.30" text-anchor="end">150</text>
<text x="731" y="617.10" text-anchor="end">100</text>
<text x="731" y="702.40" text-anchor="end">50</text>
<text x="786.0" y="724.4" text-anchor="middle">2000</text>
<text x="907.0" y="724.4" text-anchor="middle">2500</text>
<text x="1028.1999999999998" y="724.4" text-anchor="middle">3000</text>
<text x="1149.3" y="724.4" text-anchor="middle">3500</text>
<text x="1270.1" y="724.4" text-anchor="middle">4000</text>
</g>
<text x="999" y="747" text-anchor="middle" font-size="14.4" fill="#525a6e">curb.weight</text>
<text transform="translate(704.5,596) rotate(-90)" text-anchor="middle" font-size="14.4" fill="#525a6e">horsepower</text>
<g fill="#1f77b4" stroke="#1a5f97" stroke-width="1">
<circle cx="980.7" cy="430.9" r="5.3"/>
<circle cx="920" cy="585.75" r="5.3"/>
<circle cx="946.3" cy="596.55" r="5.3"/>
<circle cx="955.5" cy="596.75" r="5.3"/>
<circle cx="990.4" cy="596.75" r="5.3"/>
<circle cx="1006.8" cy="589.15" r="5.3"/>
<circle cx="817.7" cy="610.05" r="5.3"/>
<circle cx="882.7" cy="611.15" r="5.3"/>
<circle cx="860.6" cy="637.45" r="5.3"/>
<circle cx="833.2" cy="644.25" r="5.3"/>
<circle cx="868.3" cy="650.95" r="5.3"/>
<circle cx="902.5" cy="659.55" r="5.3"/>
<circle cx="776.1" cy="653.85" r="5.3"/>
<circle cx="764.9" cy="664.05" r="5.3"/>
<circle cx="767.1" cy="667.35" r="5.3"/>
<circle cx="774.5" cy="667.35" r="5.3"/>
<circle cx="778.6" cy="667.65" r="5.3"/>
<circle cx="792.3" cy="666.25" r="5.3"/>
<circle cx="782.6" cy="678.45" r="5.3"/>
<circle cx="852.8" cy="688.35" r="5.3"/>
<circle cx="849.4" cy="695.25" r="5.3"/>
<circle cx="1007" cy="485.45" r="5.3"/>
<circle cx="1040.9" cy="510.95" r="5.3"/>
<circle cx="1080.4" cy="603.25" r="5.3"/>
<circle cx="1132" cy="622.15" r="5.3"/>
<circle cx="1214.5" cy="574.45" r="5.3"/>
<circle cx="1286.3" cy="484.15" r="5.3"/>
</g>
<circle cx="986.1" cy="521.60" r="4.7" fill="#1f77b4" stroke="#000" stroke-width="2.3"/>
<path d="M739.5,672.6 L1312.7,477.4" stroke="#000" stroke-width="3.35" fill="none"/>
<rect x="795" y="421" width="232" height="22.5" fill="#fff" fill-opacity="0.8"/>
<text x="804.8" y="438" font-size="14.05" fill="#333" xml:space="preserve" style="white-space:pre">y = -21.9  + 0.0484 * x,   r2 = 0.488</text>
</svg>
<div class="status">
<div class="t" style="left:255.5px;width:118px;overflow:hidden;">DF with customized viewers (3)</div>
<div class="t" style="left:382px;">Columns: 17</div>
<div class="t" style="left:479.5px;">Rows: 30</div>
<div class="abs" style="left:1146.2px;top:0;width:30.6px;height:25px;background:#dcdcdb"></div>
</div>
<svg class="abs" style="left:1070px;top:758px" width="260" height="25" viewBox="1070 758 260 25">
<g fill="none" stroke="#4f4f55" stroke-width="1.15" stroke-linecap="round" stroke-linejoin="round">
<circle cx="1088.3" cy="768.3" r="5.3"/><path d="M1092.2,772.3 L1096.3,776.5"/>
<rect x="1114.6" y="763.8" width="12.8" height="11.6" rx="1"/><path d="M1114.6,767.2 H1127.4"/>
<rect x="1146.2" y="763.5" width="11.4" height="13" rx="0.8"/>
<path d="M1151.3,766.6 H1155.4 M1151.3,769.9 H1155.4 M1151.3,773.4 H1155.4" stroke-width="1"/>
<path d="M1148.4,766.6 h1 M1148.4,769.9 h1 M1148.4,773.4 h1" stroke-width="1.5"/>
<path d="M1175.6,765.5 H1189.6 M1175.6,769.5 H1189.6 M1175.6,773.5 H1189.6"/>
<g fill="#f7f6f4"><ellipse cx="1181.3" cy="765.5" rx="1.1" ry="1.9"/><ellipse cx="1185.6" cy="769.5" rx="1.1" ry="1.9"/><ellipse cx="1179.4" cy="773.5" rx="1.1" ry="1.9"/></g>
<circle cx="1213.5" cy="764.7" r="2" fill="#dcdcdb" stroke-width="1.25"/>
<path d="M1210.8,768.1 H1215.1 V773.1 Q1216.9,773.5 1216.9,775 V776.7 H1210.3 V775 Q1210.3,773.5 1212.1,773.1 V770.3 H1210.8 Z" fill="#dcdcdb" stroke-width="1.25"/>
<path d="M1238.3,763.5 V775.6 M1250,763.5 V775.6 M1241.7,767.3 l4.8,4.8 m0,-4.8 l-4.8,4.8"/>
<path d="M1266.4,763.8 L1272.6,769.6 L1266.4,775.4 M1274,775.3 H1283.4"/>
<path d="M1297.8,763.4 H1313.8 M1299.2,763.4 V771.6 H1312.6 V763.4 M1305.9,771.8 V773.4 M1303.2,776.6 L1305.9,773.4 L1308.6,776.6"/>
</g></svg>
</div>
</body></html>
